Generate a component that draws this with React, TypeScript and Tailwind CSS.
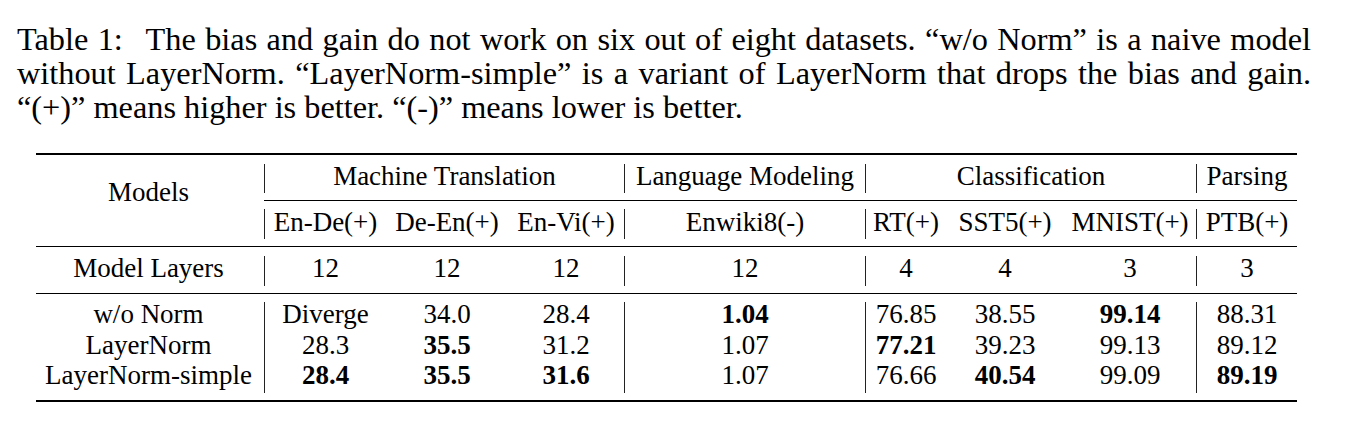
const cols =
  "grid grid-cols-[228px_1px_121px_122px_116px_1px_240px_1px_80px_118px_132px_1px_100px]";

type Cell = { v: string; b?: boolean };

// data columns, one entry per model row
const data: Cell[][] = [
  [{ v: "Diverge" }, { v: "28.3" }, { v: "28.4", b: true }],
  [{ v: "34.0" }, { v: "35.5", b: true }, { v: "35.5", b: true }],
  [{ v: "28.4" }, { v: "31.2" }, { v: "31.6", b: true }],
  [{ v: "1.04", b: true }, { v: "1.07" }, { v: "1.07" }],
  [{ v: "76.85" }, { v: "77.21", b: true }, { v: "76.66" }],
  [{ v: "38.55" }, { v: "39.23" }, { v: "40.54", b: true }],
  [{ v: "99.14", b: true }, { v: "99.13" }, { v: "99.09" }],
  [{ v: "88.31" }, { v: "89.12" }, { v: "89.19", b: true }],
];

const Sep = ({ cls }: { cls: string }) => (
  <div className="flex justify-center">
    <div className={"w-px bg-[#222] " + cls} />
  </div>
);

const Col = ({ cells }: { cells: Cell[] }) => (
  <div className="flex flex-col items-center pt-[5px] leading-[30.5px]">
    {cells.map((c, i) => (
      <span key={i} className={c.b ? "font-bold" : ""}>
        {c.v}
      </span>
    ))}
  </div>
);

export default function App() {
  return (
    <div className="bg-white w-[1358px] h-[431px] text-black font-['Liberation_Serif','Times_New_Roman',serif]">
      {/* Caption */}
      <p className="pt-[22px] pl-[17px] w-[1311px] text-[32.3px] leading-[34px] text-justify">
        <span className="mr-[14px]">Table 1:</span> The bias and gain do not work on six out of
        eight datasets. “w/o Norm” is a naive model without LayerNorm. “LayerNorm-simple” is a
        variant of LayerNorm that drops the bias and gain. “(+)” means higher is better. “(-)” means
        lower is better.
      </p>

      {/* Table */}
      <div className="ml-[36px] mt-[29px] w-[1261px] text-[27px] leading-[30px]">
        <div className="h-[2px] bg-black" />

        {/* header rows */}
        <div className={cols + " grid-rows-[45px_1px_45px]"}>
          <div className="row-span-3 text-center pr-[3px] pt-[22px]">Models</div>
          <Sep cls="mt-[9px] h-[29px]" />
          <div className="col-span-3 text-center pt-[6px]">Machine Translation</div>
          <Sep cls="mt-[9px] h-[29px]" />
          <div className="text-center pt-[6px]">Language Modeling</div>
          <Sep cls="mt-[9px] h-[29px]" />
          <div className="col-span-3 text-center pt-[6px]">Classification</div>
          <Sep cls="mt-[9px] h-[29px]" />
          <div className="text-center pt-[6px]">Parsing</div>

          <div className="col-span-12 bg-black" />

          <Sep cls="mt-[8px] h-[30px]" />
          <div className="text-center pt-[6px]">En-De(+)</div>
          <div className="text-center pt-[6px]">De-En(+)</div>
          <div className="text-center pt-[6px]">En-Vi(+)</div>
          <Sep cls="mt-[8px] h-[30px]" />
          <div className="text-center pt-[6px]">Enwiki8(-)</div>
          <Sep cls="mt-[8px] h-[30px]" />
          <div className="text-center pt-[6px]">RT(+)</div>
          <div className="text-center pt-[6px]">SST5(+)</div>
          <div className="text-center pt-[6px]">MNIST(+)</div>
          <Sep cls="mt-[8px] h-[30px]" />
          <div className="text-center pt-[6px]">PTB(+)</div>
        </div>

        <div className="h-px bg-black" />

        {/* model layers */}
        <div className={cols + " h-[46px]"}>
          <div className="text-center pr-[3px] pt-[6px]">Model Layers</div>
          <Sep cls="mt-[9px] h-[30px]" />
          <div className="text-center pt-[6px]">12</div>
          <div className="text-center pt-[6px]">12</div>
          <div className="text-center pt-[6px]">12</div>
          <Sep cls="mt-[9px] h-[30px]" />
          <div className="text-center pt-[6px]">12</div>
          <Sep cls="mt-[9px] h-[30px]" />
          <div className="text-center pt-[6px]">4</div>
          <div className="text-center pt-[6px]">4</div>
          <div className="text-center pt-[6px]">3</div>
          <Sep cls="mt-[9px] h-[30px]" />
          <div className="text-center pt-[6px]">3</div>
        </div>

        <div className="h-px bg-black" />

        {/* results */}
        <div className={cols + " h-[106px]"}>
          <div className="flex flex-col items-center pr-[3px] pt-[5px] leading-[30.5px]">
            <span>w/o Norm</span>
            <span>LayerNorm</span>
            <span>LayerNorm-simple</span>
          </div>
          <Sep cls="mt-[8px] h-[91px]" />
          <Col cells={data[0]} />
          <Col cells={data[1]} />
          <Col cells={data[2]} />
          <Sep cls="mt-[8px] h-[91px]" />
          <Col cells={data[3]} />
          <Sep cls="mt-[8px] h-[91px]" />
          <Col cells={data[4]} />
          <Col cells={data[5]} />
          <Col cells={data[6]} />
          <Sep cls="mt-[8px] h-[91px]" />
          <Col cells={data[7]} />
        </div>

        <div className="h-[2px] bg-black" />
      </div>
    </div>
  );
}
